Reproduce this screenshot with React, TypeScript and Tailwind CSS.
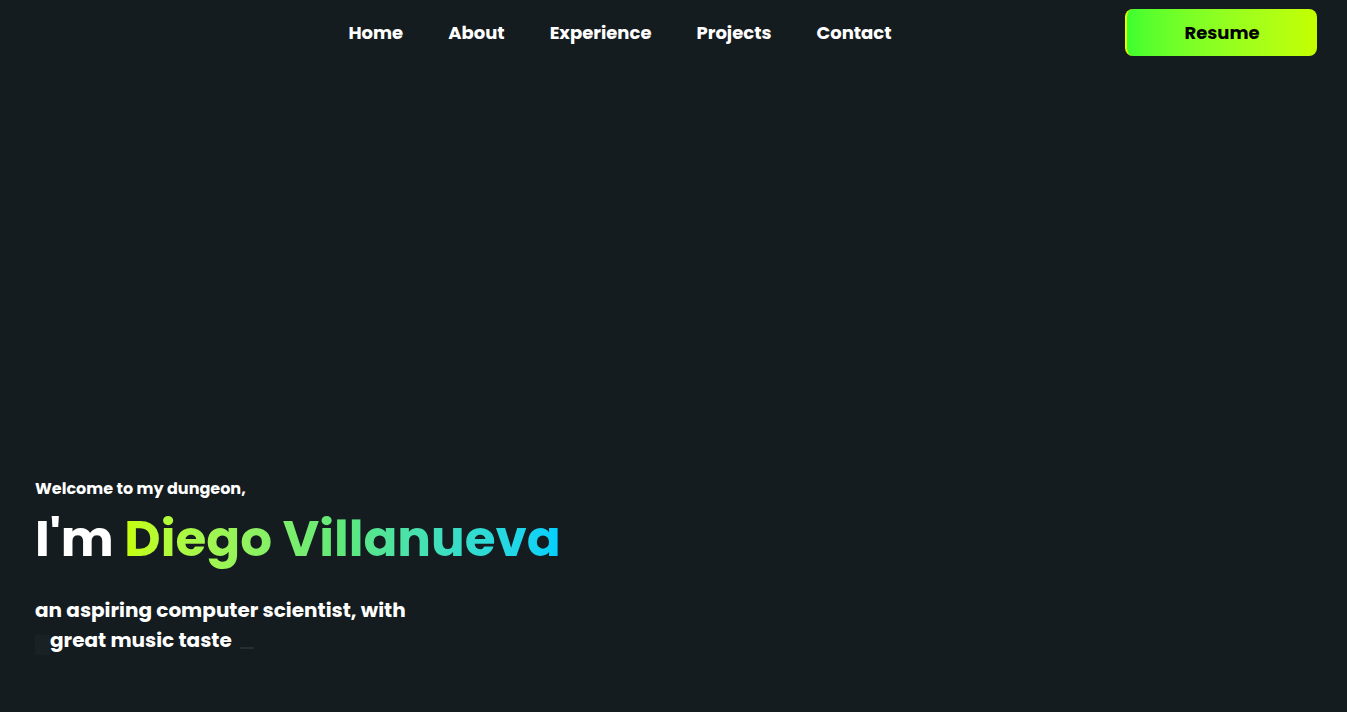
export default function App() {
  const font = { fontFamily: 'Poppins, Inter, "Noto Sans", sans-serif' };
  return (
    <div style={font} className="w-full h-[712px] bg-[#151c1f] text-white flex flex-col overflow-hidden">
      <header className="h-[65px] flex items-center pl-[115px] pr-[30px]">
        <nav className="flex-1 flex justify-center gap-[45px] text-[18px] font-bold">
          <a>Home</a>
          <a>About</a>
          <a>Experience</a>
          <a>Projects</a>
          <a>Contact</a>
        </nav>
        <button className="w-[192px] h-[47px] rounded-[8px] border-l-2 border-[#e5ff00] bg-gradient-to-r from-[#3dff2f] to-[#c4ff00] text-black text-[18px] font-bold">
          Resume
        </button>
      </header>
      <main className="flex-1 flex flex-col justify-end pl-[35px] pb-[57px]">
        <p className="text-[16px] font-bold">Welcome to my dungeon,</p>
        <h1 className="text-[50px] font-bold leading-none mt-[13px]">
          I'm{' '}
          <span className="bg-gradient-to-r from-[#c4ff00] via-[#5ee87a] to-[#00d0ff] bg-clip-text text-transparent">
            Diego Villanueva
          </span>
        </h1>
        <div className="mt-[31px] text-[20px] font-bold leading-[30px]">
          <p>an aspiring computer scientist, with</p>
          <p className="flex items-end">
            <span className="w-[15px] h-[20px] bg-[#192125] inline-block" />
            <span>great music taste</span>
            <span className="w-[14px] h-[2px] bg-[#252e32] inline-block ml-[8px] mb-[6px]" />
          </p>
        </div>
      </main>
    </div>
  );
}
